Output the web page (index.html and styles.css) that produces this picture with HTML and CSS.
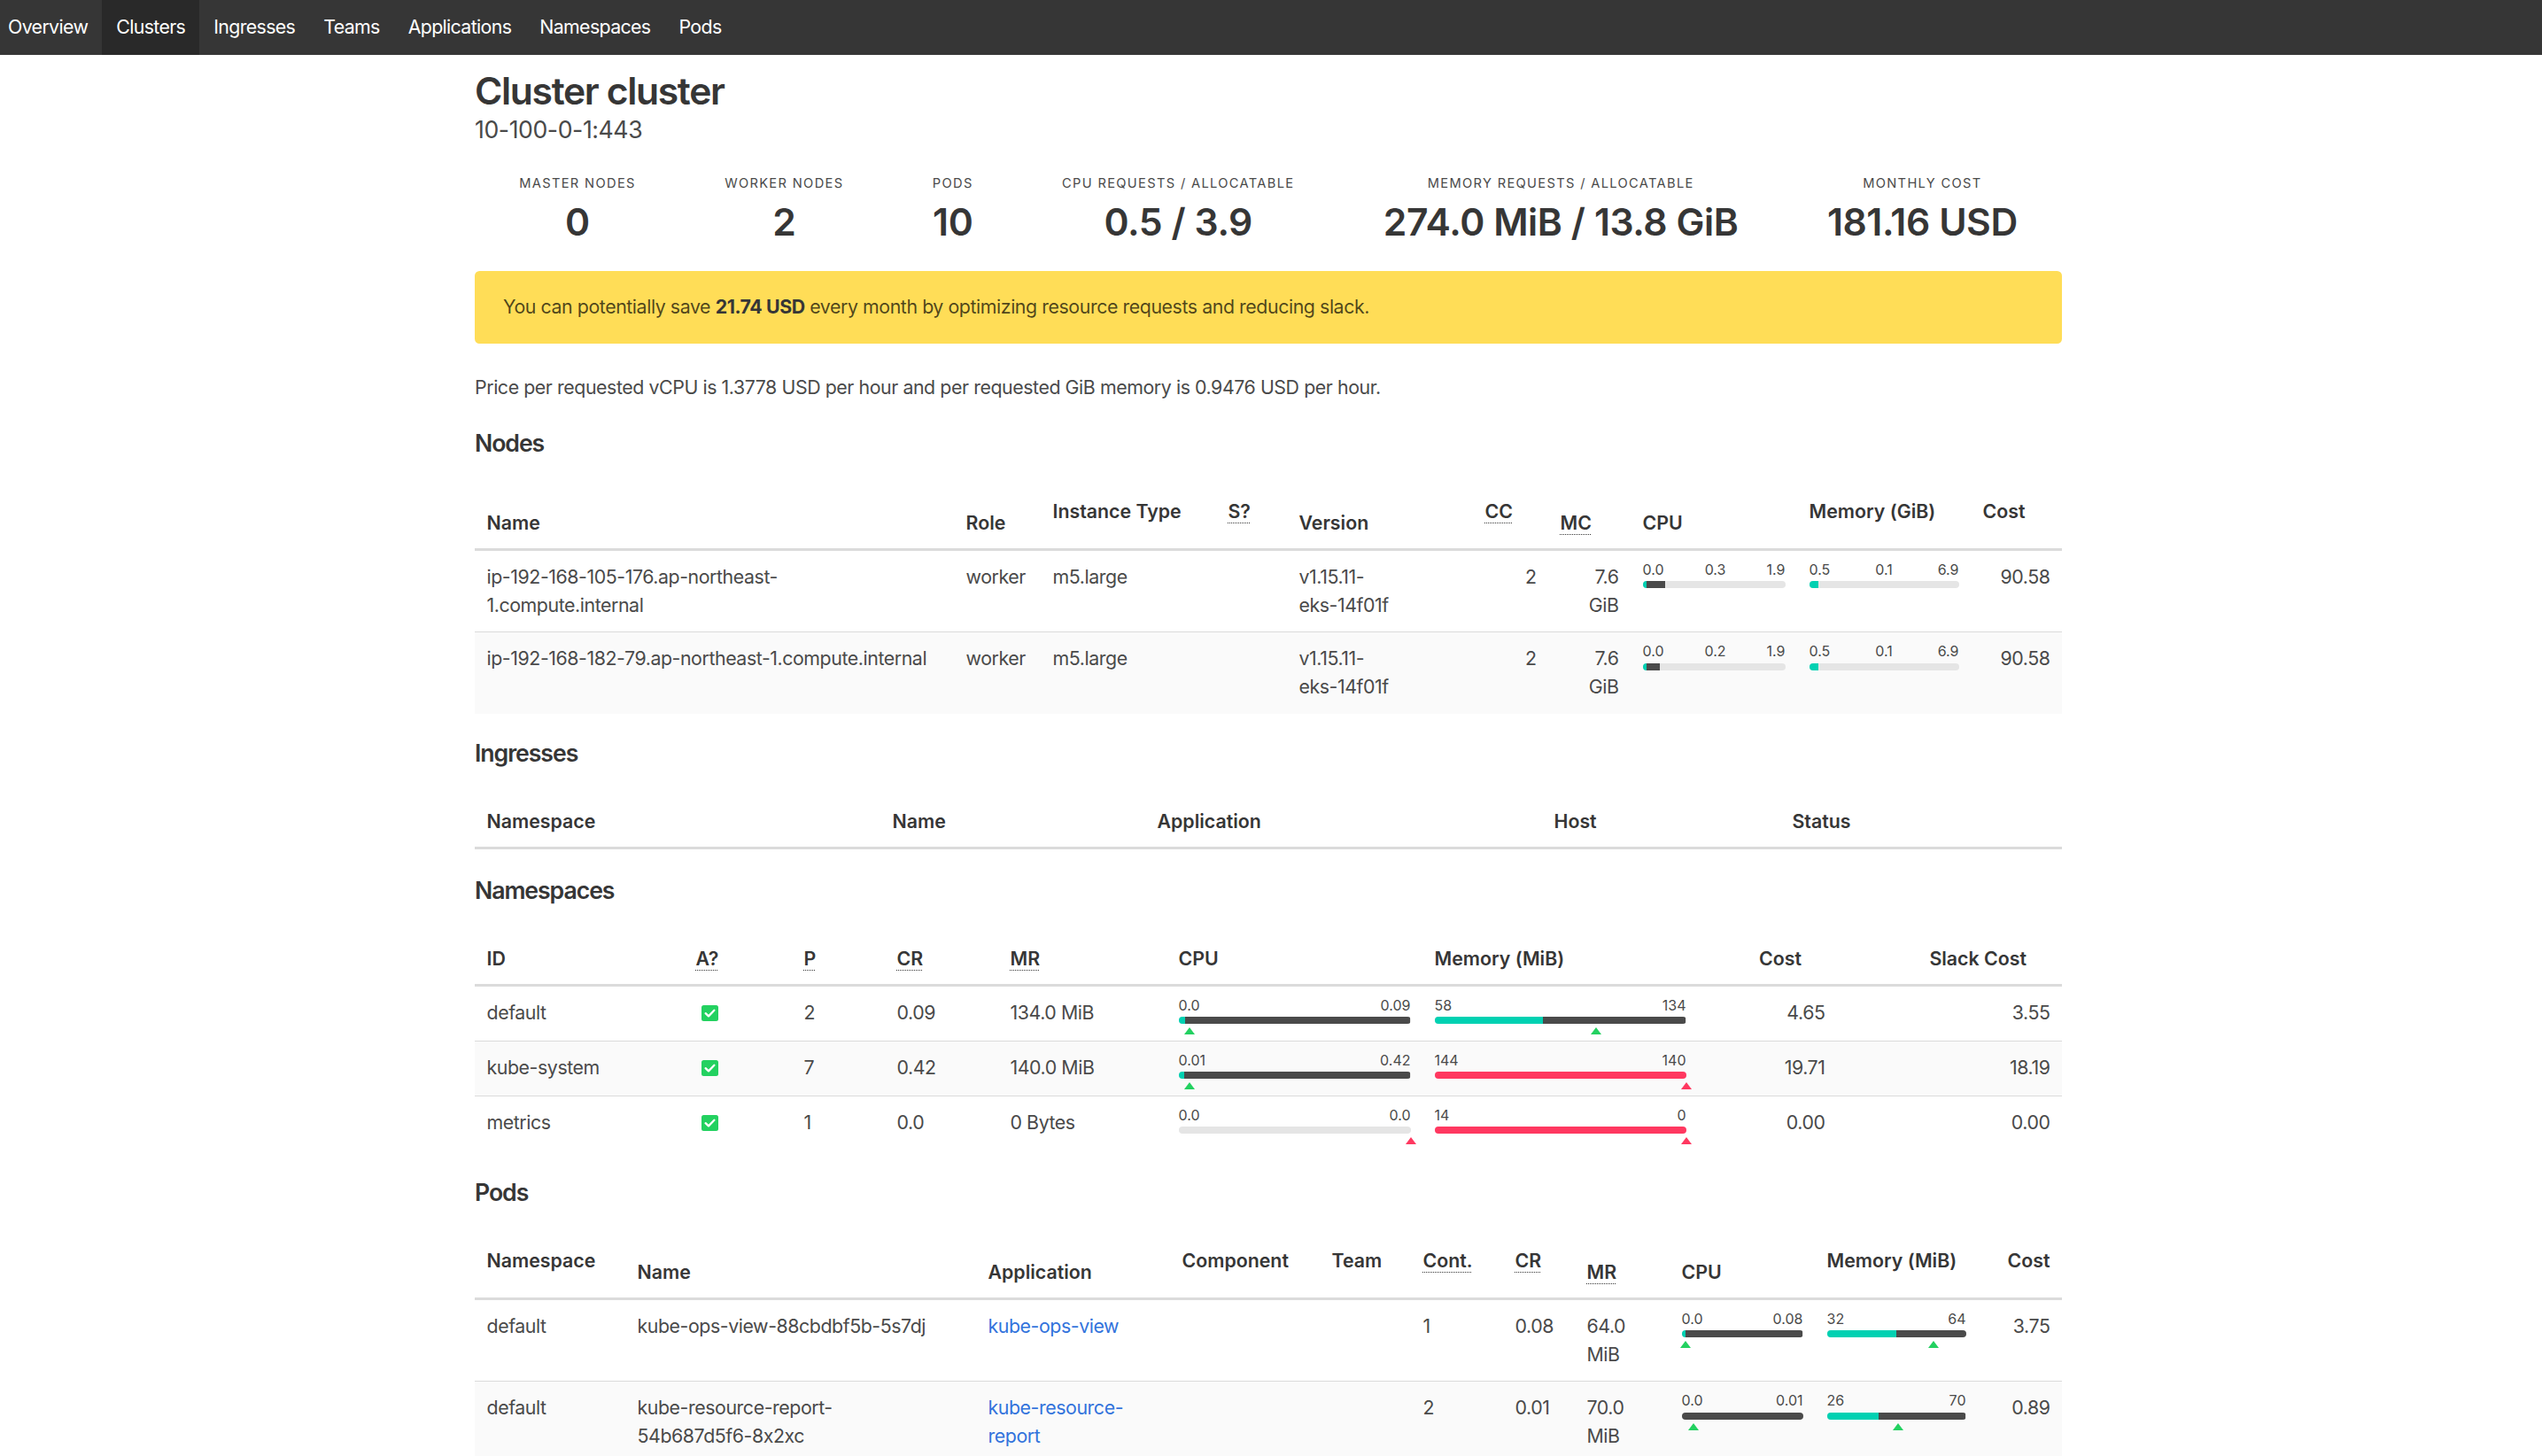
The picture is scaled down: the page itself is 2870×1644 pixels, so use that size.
FILE: index.html
```html
<!DOCTYPE html>
<html lang="en">
<head>
<meta charset="utf-8">
<title>Cluster cluster</title>
<link rel="stylesheet" href="styles.css">
</head>
<body>
<nav class="navbar">
  <a class="nav-item" href="#">Overview</a>
  <a class="nav-item is-active" href="#">Clusters</a>
  <a class="nav-item" href="#">Ingresses</a>
  <a class="nav-item" href="#">Teams</a>
  <a class="nav-item" href="#">Applications</a>
  <a class="nav-item" href="#">Namespaces</a>
  <a class="nav-item" href="#">Pods</a>
</nav>
<main class="main">
<div class="container">
  <h1 class="title">Cluster cluster</h1>
  <p class="subtitle">10-100-0-1:443</p>

  <div class="level">
    <div class="level-item"><p class="heading">Master Nodes</p><p class="stat">0</p></div>
    <div class="level-item"><p class="heading">Worker Nodes</p><p class="stat">2</p></div>
    <div class="level-item"><p class="heading">Pods</p><p class="stat">10</p></div>
    <div class="level-item"><p class="heading">CPU Requests / Allocatable</p><p class="stat">0.5 / 3.9</p></div>
    <div class="level-item"><p class="heading">Memory Requests / Allocatable</p><p class="stat">274.0 MiB / 13.8 GiB</p></div>
    <div class="level-item"><p class="heading">Monthly Cost</p><p class="stat">181.16 USD</p></div>
  </div>

  <div class="notification">You can potentially save <strong>21.74 USD</strong> every month by optimizing resource requests and reducing slack.</div>

  <p class="price">Price per requested vCPU is 1.3778 USD per hour and per requested GiB memory is 0.9476 USD per hour.</p>

  <h2 class="section-title">Nodes</h2>
  <table class="table nodes">
    <colgroup>
      <col class="n-name"><col class="n-role"><col class="n-type"><col class="n-spot"><col class="n-ver"><col class="n-cc"><col class="n-mc"><col class="n-cpu"><col class="n-mem"><col class="n-cost">
    </colgroup>
    <thead>
      <tr>
        <th>Name</th>
        <th>Role</th>
        <th class="hi">Instance Type</th>
        <th class="hi"><abbr title="Spot Instance">S?</abbr></th>
        <th>Version</th>
        <th class="hi"><abbr title="CPU Capacity">CC</abbr></th>
        <th><abbr title="Memory Capacity">MC</abbr></th>
        <th>CPU</th>
        <th class="hi">Memory (GiB)</th>
        <th class="hi">Cost</th>
      </tr>
    </thead>
    <tbody>
      <tr>
        <td>ip-192-168-105-176.ap-northeast-<br>1.compute.internal</td>
        <td>worker</td>
        <td>m5.large</td>
        <td></td>
        <td>v1.15.11-<br>eks-14f01f</td>
        <td class="num">2</td>
        <td class="num">7.6<br>GiB</td>
        <td>
          <div class="gauge">
            <div class="gauge-labels"><span>0.0</span><span>0.3</span><span>1.9</span></div>
            <div class="bar"><span class="seg used" style="width:2.5%"></span><span class="seg req" style="width:13.3%"></span></div>
          </div>
        </td>
        <td>
          <div class="gauge">
            <div class="gauge-labels"><span>0.5</span><span>0.1</span><span>6.9</span></div>
            <div class="bar"><span class="seg used" style="width:6.5%"></span></div>
          </div>
        </td>
        <td class="num">90.58</td>
      </tr>
      <tr>
        <td class="nowrap">ip-192-168-182-79.ap-northeast-1.compute.internal</td>
        <td>worker</td>
        <td>m5.large</td>
        <td></td>
        <td>v1.15.11-<br>eks-14f01f</td>
        <td class="num">2</td>
        <td class="num">7.6<br>GiB</td>
        <td>
          <div class="gauge">
            <div class="gauge-labels"><span>0.0</span><span>0.2</span><span>1.9</span></div>
            <div class="bar"><span class="seg used" style="width:2.5%"></span><span class="seg req" style="width:9.4%"></span></div>
          </div>
        </td>
        <td>
          <div class="gauge">
            <div class="gauge-labels"><span>0.5</span><span>0.1</span><span>6.9</span></div>
            <div class="bar"><span class="seg used" style="width:6.5%"></span></div>
          </div>
        </td>
        <td class="num">90.58</td>
      </tr>
    </tbody>
  </table>

  <h2 class="section-title">Ingresses</h2>
  <table class="table ingresses">
    <colgroup>
      <col class="i-ns"><col class="i-name"><col class="i-app"><col class="i-host"><col class="i-status">
    </colgroup>
    <thead>
      <tr><th>Namespace</th><th>Name</th><th>Application</th><th>Host</th><th>Status</th></tr>
    </thead>
    <tbody></tbody>
  </table>

  <h2 class="section-title">Namespaces</h2>
  <table class="table namespaces">
    <colgroup>
      <col class="s-id"><col class="s-a"><col class="s-p"><col class="s-cr"><col class="s-mr"><col class="s-cpu"><col class="s-mem"><col class="s-cost"><col class="s-slack">
    </colgroup>
    <thead>
      <tr>
        <th>ID</th>
        <th><abbr title="Active">A?</abbr></th>
        <th><abbr title="Pods">P</abbr></th>
        <th><abbr title="CPU Requests">CR</abbr></th>
        <th><abbr title="Memory Requests">MR</abbr></th>
        <th>CPU</th>
        <th>Memory (MiB)</th>
        <th class="sorted-right">Cost</th>
        <th class="sorted-right">Slack Cost</th>
      </tr>
    </thead>
    <tbody>
      <tr>
        <td>default</td>
        <td><span class="icon"><svg width="19" height="18" viewBox="0 0 19 18"><rect x="0" y="0" width="19" height="18" rx="2.5" fill="#23d160"/><path d="M4.6 9.2 L8 12.4 L14.4 5.8" fill="none" stroke="#fff" stroke-width="2.3" stroke-linecap="round" stroke-linejoin="round"/></svg></span></td>
        <td>2</td>
        <td>0.09</td>
        <td>134.0 MiB</td>
        <td>
          <div class="gauge">
            <div class="gauge-labels"><span>0.0</span><span>0.09</span></div>
            <div class="bar"><span class="seg used" style="width:2.7%"></span><span class="seg req" style="width:97.3%"></span></div>
            <span class="marker" style="left:4.6%"></span>
          </div>
        </td>
        <td>
          <div class="gauge">
            <div class="gauge-labels"><span>58</span><span>134</span></div>
            <div class="bar"><span class="seg used" style="width:43.3%"></span><span class="seg req" style="width:56.7%"></span></div>
            <span class="marker" style="left:64.3%"></span>
          </div>
        </td>
        <td class="num">4.65</td>
        <td class="num">3.55</td>
      </tr>
      <tr>
        <td>kube-system</td>
        <td><span class="icon"><svg width="19" height="18" viewBox="0 0 19 18"><rect x="0" y="0" width="19" height="18" rx="2.5" fill="#23d160"/><path d="M4.6 9.2 L8 12.4 L14.4 5.8" fill="none" stroke="#fff" stroke-width="2.3" stroke-linecap="round" stroke-linejoin="round"/></svg></span></td>
        <td>7</td>
        <td>0.42</td>
        <td>140.0 MiB</td>
        <td>
          <div class="gauge">
            <div class="gauge-labels"><span>0.01</span><span>0.42</span></div>
            <div class="bar"><span class="seg used" style="width:2.4%"></span><span class="seg req" style="width:97.6%"></span></div>
            <span class="marker" style="left:4.6%"></span>
          </div>
        </td>
        <td>
          <div class="gauge">
            <div class="gauge-labels"><span>144</span><span>140</span></div>
            <div class="bar"><span class="seg over" style="width:100%"></span></div>
            <span class="marker bad" style="left:100%"></span>
          </div>
        </td>
        <td class="num">19.71</td>
        <td class="num">18.19</td>
      </tr>
      <tr>
        <td>metrics</td>
        <td><span class="icon"><svg width="19" height="18" viewBox="0 0 19 18"><rect x="0" y="0" width="19" height="18" rx="2.5" fill="#23d160"/><path d="M4.6 9.2 L8 12.4 L14.4 5.8" fill="none" stroke="#fff" stroke-width="2.3" stroke-linecap="round" stroke-linejoin="round"/></svg></span></td>
        <td>1</td>
        <td>0.0</td>
        <td>0 Bytes</td>
        <td>
          <div class="gauge">
            <div class="gauge-labels"><span>0.0</span><span>0.0</span></div>
            <div class="bar"></div>
            <span class="marker bad" style="left:100%"></span>
          </div>
        </td>
        <td>
          <div class="gauge">
            <div class="gauge-labels"><span>14</span><span>0</span></div>
            <div class="bar"><span class="seg over" style="width:100%"></span></div>
            <span class="marker bad" style="left:100%"></span>
          </div>
        </td>
        <td class="num">0.00</td>
        <td class="num">0.00</td>
      </tr>
    </tbody>
  </table>

  <h2 class="section-title">Pods</h2>
  <table class="table pods">
    <colgroup>
      <col class="p-ns"><col class="p-name"><col class="p-app"><col class="p-comp"><col class="p-team"><col class="p-cont"><col class="p-cr"><col class="p-mr"><col class="p-cpu"><col class="p-mem"><col class="p-cost">
    </colgroup>
    <thead>
      <tr>
        <th class="hi">Namespace</th>
        <th>Name</th>
        <th>Application</th>
        <th class="hi">Component</th>
        <th class="hi">Team</th>
        <th class="hi"><abbr title="Containers">Cont.</abbr></th>
        <th class="hi"><abbr title="CPU Requests">CR</abbr></th>
        <th><abbr title="Memory Requests">MR</abbr></th>
        <th>CPU</th>
        <th class="hi">Memory (MiB)</th>
        <th class="hi num">Cost</th>
      </tr>
    </thead>
    <tbody>
      <tr>
        <td>default</td>
        <td>kube-ops-view-88cbdbf5b-5s7dj</td>
        <td><a class="link" href="#">kube-ops-view</a></td>
        <td></td>
        <td></td>
        <td>1</td>
        <td>0.08</td>
        <td>64.0 MiB</td>
        <td>
          <div class="gauge">
            <div class="gauge-labels"><span>0.0</span><span>0.08</span></div>
            <div class="bar"><span class="seg used" style="width:3%"></span><span class="seg req" style="width:97%"></span></div>
            <span class="marker" style="left:3.6%"></span>
          </div>
        </td>
        <td>
          <div class="gauge">
            <div class="gauge-labels"><span>32</span><span>64</span></div>
            <div class="bar"><span class="seg used" style="width:50%"></span><span class="seg req" style="width:50%"></span></div>
            <span class="marker" style="left:76.6%"></span>
          </div>
        </td>
        <td class="num">3.75</td>
      </tr>
      <tr>
        <td>default</td>
        <td>kube-resource-report-<br>54b687d5f6-8x2xc</td>
        <td><a class="link" href="#">kube-resource-report</a></td>
        <td></td>
        <td></td>
        <td>2</td>
        <td>0.01</td>
        <td>70.0 MiB</td>
        <td>
          <div class="gauge">
            <div class="gauge-labels"><span>0.0</span><span>0.01</span></div>
            <div class="bar"><span class="seg req" style="width:100%"></span></div>
            <span class="marker" style="left:9.5%"></span>
          </div>
        </td>
        <td>
          <div class="gauge">
            <div class="gauge-labels"><span>26</span><span>70</span></div>
            <div class="bar"><span class="seg used" style="width:37.1%"></span><span class="seg req" style="width:62.9%"></span></div>
            <span class="marker" style="left:51%"></span>
          </div>
        </td>
        <td class="num">0.89</td>
      </tr>
    </tbody>
  </table>
</div>
</main>
</body>
</html>
```

FILE: styles.css
```css
* { box-sizing: border-box; }
html, body { margin: 0; padding: 0; }
body {
  font-family: Inter, "Noto Sans", "Liberation Sans", sans-serif;
  font-feature-settings: "calt" 0;
  font-size: 21.33px;
  line-height: 1.5;
  letter-spacing: -0.02em;
  color: #4a4a4a;
  background: #fff;
}

/* navbar */
.navbar { display: flex; height: 62px; background: #363636; }
.nav-item { display: flex; align-items: center; padding: 0 16px; color: #fff; text-decoration: none; letter-spacing: -0.03em; }
.nav-item:first-child { margin-left: -7px; }
.nav-item.is-active { background: #292929; }

/* page */
.main { padding: 17px 6px 0 0; }
.container { width: 1792px; margin: 0 auto; }

.title { margin: 0 0 3px; font-size: 42.67px; font-weight: 600; line-height: 1.125; letter-spacing: -0.032em; color: #363636; }
.subtitle { margin: 0 0 33px; font-size: 26.67px; line-height: 1.25; color: #4a4a4a; }

.level { display: flex; margin-bottom: 31px; }
.level-item { flex: 1 1 auto; text-align: center; }
.heading { margin: 0 0 8.67px; font-size: 14.67px; letter-spacing: 1.33px; text-transform: uppercase; line-height: 1.5; color: #4a4a4a; }
.stat { margin: 0; font-size: 42.67px; font-weight: 600; line-height: 1.125; letter-spacing: -0.01em; color: #363636; }

.notification {
  background: #ffdd57;
  color: rgba(0, 0, 0, 0.7);
  border-radius: 5.33px;
  padding: 25px 53px 25px 32px;
  margin-bottom: 34.5px;
}
.notification strong { font-weight: 700; color: #363636; }

.price { margin: 0 0 30.5px; }

.section-title { margin: 0 0 36px; font-size: 26.67px; font-weight: 600; line-height: 1.125; letter-spacing: -0.04em; color: #363636; }

/* tables */
.table { width: 100%; table-layout: fixed; border-collapse: collapse; border-spacing: 0; margin-bottom: 34px; color: #4a4a4a; }
.table th {
  padding: 11.5px 13.5px;
  text-align: left;
  vertical-align: bottom;
  font-weight: 600;
  letter-spacing: 0;
  color: #363636;
  border-bottom: 3px solid #dbdbdb;
}
.table th.hi { padding-bottom: 24.5px; }
.table th.num { text-align: right; }
.table th.sorted-right { text-align: right; padding-right: 40px; }
.table td { padding: 14px 13.5px 13.5px; vertical-align: top; border-bottom: 1px solid #dbdbdb; }
.table tbody tr:last-child td { border-bottom: 0; }
.table tbody tr:nth-child(even) { background: #fafafa; }
.table td.num { text-align: right; }
.table td.nowrap { white-space: nowrap; }
.nodes { margin-bottom: 29px; }
.ingresses { margin-bottom: 31px; }
.namespaces { margin-bottom: 32px; }

abbr { text-decoration: underline dotted; text-decoration-thickness: 1px; text-underline-offset: 5px; }

.link { color: #3273dc; text-decoration: none; }

.icon { display: inline-flex; width: 32px; height: 32px; align-items: center; justify-content: center; vertical-align: top; }

/* column widths */
.n-name { width: 541px; } .n-role { width: 98px; } .n-type { width: 198px; } .n-spot { width: 80px; }
.n-ver { width: 210px; } .n-cc { width: 85px; } .n-mc { width: 93px; } .n-cpu { width: 188px; }
.n-mem { width: 196px; } .n-cost { width: 103px; }

.i-ns { width: 458px; } .i-name { width: 299px; } .i-app { width: 448px; } .i-host { width: 269px; } .i-status { width: 318px; }

.s-id { width: 236px; } .s-a { width: 122px; } .s-p { width: 105px; } .s-cr { width: 128px; } .s-mr { width: 190px; }
.s-cpu { width: 289px; } .s-mem { width: 311px; } .s-cost { width: 157px; } .s-slack { width: 254px; }

.p-ns { width: 170px; } .p-name { width: 396px; } .p-app { width: 219px; } .p-comp { width: 169px; } .p-team { width: 103px; }
.p-cont { width: 104px; } .p-cr { width: 81px; } .p-mr { width: 107px; } .p-cpu { width: 164px; } .p-mem { width: 184px; } .p-cost { width: 95px; }

/* gauges */
.gauge { position: relative; height: 36.5px; margin-top: -3px; }
.gauge-labels { display: flex; justify-content: space-between; font-size: 16px; line-height: 20px; letter-spacing: 0; color: #4a4a4a; }
.bar { display: flex; height: 8px; margin-top: 3.3px; border-radius: 4px; background: #e5e5e5; overflow: hidden; }
.seg { display: block; height: 100%; }
.seg.used { background: #00d1b2; }
.seg.req { background: #4a4a4a; }
.seg.over { background: #ff3860; }
.marker {
  position: absolute;
  top: 35.3px;
  width: 0;
  height: 0;
  border-left: 6.5px solid transparent;
  border-right: 6.5px solid transparent;
  border-bottom: 8px solid #23d160;
  transform: translateX(-50%);
}
.marker.bad { border-bottom-color: #ff3860; }
```
